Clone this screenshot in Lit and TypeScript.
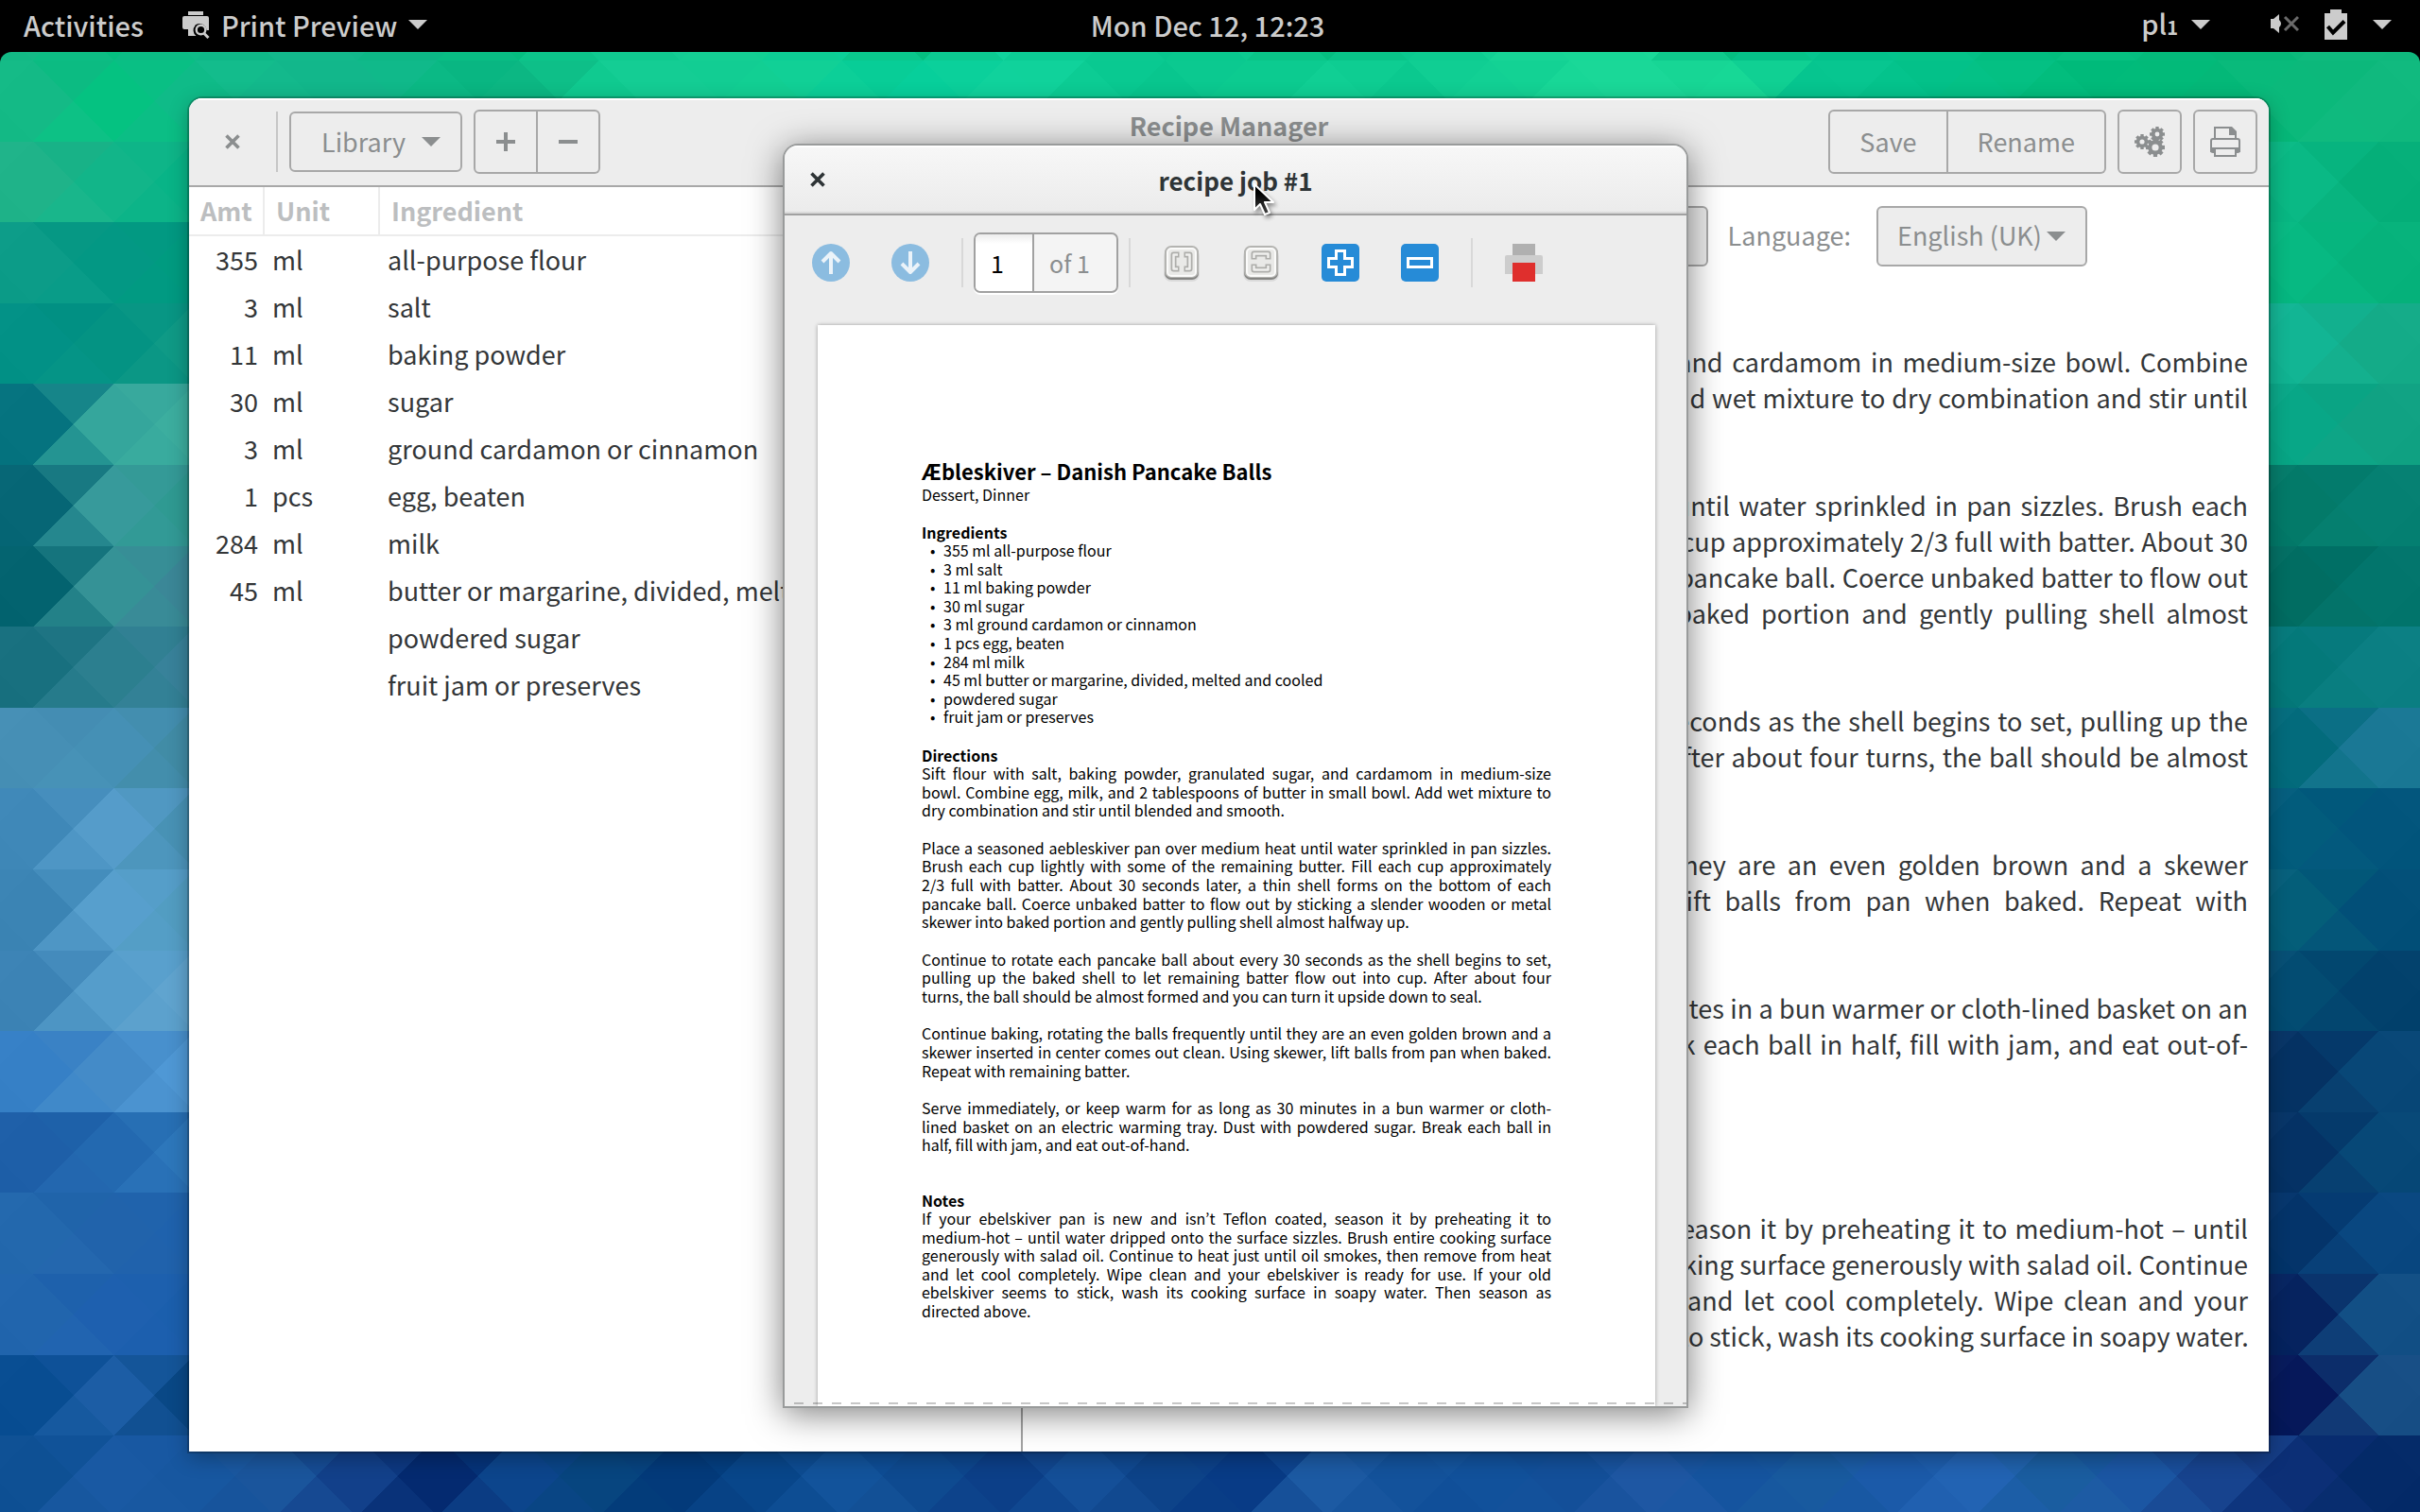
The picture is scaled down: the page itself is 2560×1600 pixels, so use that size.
import { LitElement, html, svg, css } from "lit";
import { customElement } from "lit/decorators.js";

type Ingredient = [string, string, string];

const INGREDIENTS: Ingredient[] = [
  ["355", "ml", "all-purpose flour"],
  ["3", "ml", "salt"],
  ["11", "ml", "baking powder"],
  ["30", "ml", "sugar"],
  ["3", "ml", "ground cardamon or cinnamon"],
  ["1", "pcs", "egg, beaten"],
  ["284", "ml", "milk"],
  ["45", "ml", "butter or margarine, divided, melted and cooled"],
  ["", "", "powdered sugar"],
  ["", "", "fruit jam or preserves"],
];

// Paragraphs are pre-broken into lines; every line but the last is justified.
const EDITOR_DIRECTIONS: string[][] = [
  [
    "Sift flour with salt, baking powder, granulated sugar, and cardamom in medium-size bowl. Combine",
    "egg, milk, and 2 tablespoons of butter in small bowl. Add wet mixture to dry combination and stir until",
    "blended and smooth.",
  ],
  [
    "Place a seasoned aebleskiver pan over medium heat until water sprinkled in pan sizzles. Brush each",
    "cup lightly with some of the remaining butter. Fill each cup approximately 2/3 full with batter. About 30",
    "seconds later, a thin shell forms on the bottom of each pancake ball. Coerce unbaked batter to flow out",
    "by sticking a slender wooden or metal skewer into baked portion and gently pulling shell almost",
    "halfway up.",
  ],
  [
    "Continue to rotate each pancake ball about every 30 seconds as the shell begins to set, pulling up the",
    "baked shell to let remaining batter flow out into cup. After about four turns, the ball should be almost",
    "formed and you can turn it upside down to seal.",
  ],
  [
    "Continue baking, rotating the balls frequently until they are an even golden brown and a skewer",
    "inserted in center comes out clean. Using skewer, lift balls from pan when baked. Repeat with",
    "remaining batter.",
  ],
  [
    "Serve immediately, or keep warm for as long as 30 minutes in a bun warmer or cloth-lined basket on an",
    "electric warming tray. Dust with powdered sugar. Break each ball in half, fill with jam, and eat out-of-",
    "hand.",
  ],
];

const EDITOR_NOTES: string[] = [
  "If your ebelskiver pan is new and isn’t Teflon coated, season it by preheating it to medium-hot – until",
  "water dripped onto the surface sizzles. Brush entire cooking surface generously with salad oil. Continue",
  "to heat just until oil smokes, then remove from heat and let cool completely. Wipe clean and your",
  "ebelskiver is ready for use. If your old ebelskiver seems to stick, wash its cooking surface in soapy water.",
];

const PRINT_DIRECTIONS: string[][] = [
  [
    "Sift flour with salt, baking powder, granulated sugar, and cardamom in medium-size",
    "bowl. Combine egg, milk, and 2 tablespoons of butter in small bowl. Add wet mixture to",
    "dry combination and stir until blended and smooth.",
  ],
  [
    "Place a seasoned aebleskiver pan over medium heat until water sprinkled in pan sizzles.",
    "Brush each cup lightly with some of the remaining butter. Fill each cup approximately",
    "2/3 full with batter. About 30 seconds later, a thin shell forms on the bottom of each",
    "pancake ball. Coerce unbaked batter to flow out by sticking a slender wooden or metal",
    "skewer into baked portion and gently pulling shell almost halfway up.",
  ],
  [
    "Continue to rotate each pancake ball about every 30 seconds as the shell begins to set,",
    "pulling up the baked shell to let remaining batter flow out into cup. After about four",
    "turns, the ball should be almost formed and you can turn it upside down to seal.",
  ],
  [
    "Continue baking, rotating the balls frequently until they are an even golden brown and a",
    "skewer inserted in center comes out clean. Using skewer, lift balls from pan when baked.",
    "Repeat with remaining batter.",
  ],
  [
    "Serve immediately, or keep warm for as long as 30 minutes in a bun warmer or cloth-",
    "lined basket on an electric warming tray. Dust with powdered sugar. Break each ball in",
    "half, fill with jam, and eat out-of-hand.",
  ],
];

const PRINT_NOTES: string[] = [
  "If your ebelskiver pan is new and isn’t Teflon coated, season it by preheating it to",
  "medium-hot – until water dripped onto the surface sizzles. Brush entire cooking surface",
  "generously with salad oil. Continue to heat just until oil smokes, then remove from heat",
  "and let cool completely. Wipe clean and your ebelskiver is ready for use. If your old",
  "ebelskiver seems to stick, wash its cooking surface in soapy water. Then season as",
  "directed above.",
];

/* ---------- wallpaper ---------- */

const COL = 85.57;
const ROW = 85.6;
const X0 = 35;
const Y0 = 64;

// Colour stops of each band: [column, colour].
const EDGE = (a: string, b: string, c: string, d: string, e: string): [number, string][] => [
  [0, a], [1, b], [2, c], [28, d], [29, e],
];
const TOP: [number, string][] = [
  [0, "14ba86"], [1, "05c281"], [2, "0fbb88"], [3, "13b98c"], [4, "12b78b"], [5, "0bb985"], [6, "0cb783"],
  [7, "10ca90"], [8, "14cd94"], [9, "12cf93"], [10, "0ccf98"], [11, "07cf9b"], [12, "10d29c"], [13, "0ccc94"],
  [14, "08c68e"], [15, "0ccb90"], [16, "10cf94"], [17, "0bc98f"], [18, "12d094"], [19, "18d797"], [20, "1ad898"],
  [21, "17d896"], [22, "06c58f"], [23, "04c38c"], [24, "04c186"], [25, "02bd7d"], [26, "01bb7a"], [27, "04b878"],
  [28, "0bb97b"], [29, "10b97e"],
];
const BANDS: [number, string][][] = [
  TOP.map(([k, c]) => [k, k % 5 === 1 ? "05be80" : c] as [number, string]),
  TOP,
  EDGE("1fb389", "12b589", "08b487", "0ab985", "05af79"),
  EDGE("0c9c88", "039884", "009b80", "07b982", "06b27b"),
  EDGE("029186", "049383", "0f9a86", "12b594", "14ab88"),
  EDGE("05737f", "35a69c", "3cae9f", "08a787", "10a283"),
  EDGE("066675", "379a9b", "2f9a92", "037a69", "058072"),
  EDGE("03636f", "359296", "3b8797", "016d62", "02756c"),
  EDGE("18707f", "2c7f8f", "38829a", "04797a", "0b7f83"),
  EDGE("468fb5", "4590b5", "418ca6", "036b7c", "1a7895"),
  EDGE("3f88b8", "559cca", "4892b5", "025c7c", "02557c"),
  EDGE("3b84b4", "579fcd", "529dc2", "045e79", "024f78"),
  EDGE("3c83b5", "559dcb", "60a4cf", "034c72", "02416c"),
  EDGE("3680c6", "448bc8", "4f98d5", "053263", "084777"),
  EDGE("1e5fa8", "2369b0", "2d77bb", "053265", "074877"),
  EDGE("2368ad", "2163ab", "1f62ad", "04346a", "094780"),
  EDGE("2165ad", "1e60af", "1b5fad", "06235f", "124f85"),
  EDGE("084d92", "1c5da5", "094886", "06185a", "174e85"),
  [
    "0e5094", "1959a3", "1757a0", "1a559c", "12408a", "042a70", "0c458c", "07457f", "033a7a", "08468a",
    "12539b", "0e4a90", "0c3f88", "144f98", "0d4389", "083b86", "1c5aa3", "13529b", "11519b", "134f99",
    "1e57a3", "15549f", "185a9f", "1b5aa9", "2263b3", "1a5da0", "1b56a3", "17438e", "0c2f76", "042a68",
  ].map((c, k) => [k, c] as [number, string]),
];

const rgb = (h: string) => [0, 2, 4].map((i) => parseInt(h.slice(i, i + 2), 16));

function at(band: [number, string][], k: number): number[] {
  if (k <= band[0][0]) return rgb(band[0][1]);
  for (let i = 1; i < band.length; i++) {
    const [k1, c1] = band[i];
    if (k <= k1) {
      const [k0, c0] = band[i - 1];
      const t = (k - k0) / (k1 - k0);
      const a = rgb(c0);
      const b = rgb(c1);
      return a.map((v, n) => v + (b[n] - v) * t);
    }
  }
  return rgb(band[band.length - 1][1]);
}

const paint = (c: number[], d = 0) =>
  `rgb(${c.map((v) => Math.max(0, Math.min(255, Math.round(v + d)))).join(",")})`;

function wallpaper() {
  const shapes: unknown[] = [];
  BANDS.forEach((band, i) => {
    const top = Y0 + (i - 1) * ROW;
    const mid = top + ROW / 2;
    const bot = top + ROW;
    const poly = (pts: number[][], fill: string) => {
      shapes.push(svg`<polygon points=${pts.map((p) => p.join(",")).join(" ")} fill=${fill}/>`);
    };
    for (let k = -1; k <= 30; k++) {
      const x = X0 + k * COL;
      const wob = ((k * 7 + i * 5 + 70) % 5) - 2;
      poly([[x, top], [x + COL / 2, mid], [x, bot], [x - COL / 2, mid]], paint(at(band, k)));
      poly([[x, top], [x + COL, top], [x + COL / 2, mid]], paint(at(band, k + 0.4), wob));
      poly([[x, bot], [x + COL, bot], [x + COL / 2, mid]], paint(at(band, k + 0.6), -wob));
    }
  });
  return html`<svg class="wallpaper" viewBox="0 0 2560 1600" preserveAspectRatio="none" shape-rendering="crispEdges" aria-hidden="true">${shapes}</svg>`;
}

/* ---------- icons ---------- */

const caret = html`<svg class="caret" viewBox="0 0 20 10" aria-hidden="true"><path d="M0 0h20L10 10z" fill="currentColor"/></svg>`;

const closeIcon = html`<svg class="icon16" viewBox="0 0 16 16" aria-hidden="true">
  <path d="M1.500 1.500L14.500 14.500M14.500 1.500L1.500 14.500" stroke="currentColor" stroke-width="3.600" fill="none"/></svg>`;

const printPreviewIcon = html`<svg class="icon30" viewBox="0 0 30 30" fill="currentColor" aria-hidden="true">
  <path d="M7 1h16v4H7z"/>
  <path d="M3 6h24q2 0 2 2v13h-2.500a7.500 7.500 0 0 0-12.500-5H7v4H3q-2 0-2-2V8q0-2 2-2z"/>
  <path d="M7 16h7.500a7.500 7.500 0 0 0 1 11H7z"/>
  <circle cx="20.500" cy="20.500" r="4.800" fill="none" stroke="currentColor" stroke-width="2.400"/>
  <path d="M24 24.500l4.500 4.500" stroke="currentColor" stroke-width="3"/>
</svg>`;

const volumeIcon = html`<svg class="icon30" viewBox="0 0 30 30" aria-hidden="true">
  <path d="M0 9h3L9 4v20l-6-5H0q-0 0 0-2z" fill="currentColor"/>
  <path d="M9 10q4 4 0 8z" fill="currentColor"/>
  <path d="M15 7l14 14M29 7L15 21" stroke="#6a6a6a" stroke-width="3"/>
</svg>`;

const batteryIcon = html`<svg class="battery" viewBox="0 0 24 32" aria-hidden="true">
  <path d="M6 0h12v4h6v28H0V4h6z" fill="currentColor"/>
  <path d="M3.500 18l5.500 6.500L21 12.500" fill="none" stroke="#000" stroke-width="4"/>
</svg>`;

function gear(cx: number, cy: number, r: number, hole: number) {
  const teeth = Array.from({ length: 8 }, (_, i) => i * 45);
  const t = r * 0.42;
  return svg`<g fill="currentColor">
    ${teeth.map((a) => svg`<rect x=${cx - t / 2} y=${cy - r} width=${t} height=${r * 0.5} transform=${`rotate(${a} ${cx} ${cy})`}/>`)}
    <circle cx=${cx} cy=${cy} r=${(r * 0.78 + hole) / 2} fill="none" stroke="currentColor" stroke-width=${r * 0.78 - hole}/>
  </g>`;
}
const gearsIcon = html`<svg class="icon32" viewBox="0 0 32 32" aria-hidden="true">
  ${gear(8, 16, 8, 2.6)}${gear(24, 8, 8, 2.4)}${gear(22, 22, 10, 3.6)}
</svg>`;

const printerIcon = html`<svg class="icon32" viewBox="0 0 32 32" fill="none" stroke="currentColor" stroke-width="2" aria-hidden="true">
  <path d="M5 13V1h16l6 6v6"/>
  <path d="M20 0h3l5 5v4h-8z" fill="currentColor" stroke="none"/>
  <path d="M5 27H3q-2 0-2-2V15q0-2 2-2h26q2 0 2 2v10q0 2-2 2h-2"/>
  <path d="M1 23h30"/>
  <path d="M5 23v8h22v-8"/>
  <path d="M0 23h4v4H0zM28 23h4v4h-4z" fill="currentColor" stroke="none"/>
</svg>`;

const plusIcon = html`<svg class="icon20" viewBox="0 0 20 20" aria-hidden="true"><path d="M10 0v20M0 10h20" stroke="currentColor" stroke-width="4"/></svg>`;
const minusIcon = html`<svg class="icon20" viewBox="0 0 20 20" aria-hidden="true"><path d="M0 10h20" stroke="currentColor" stroke-width="4"/></svg>`;

const arrowIcon = (down: boolean) => html`<svg class="icon40" viewBox="0 0 40 40" aria-hidden="true">
  <circle cx="20" cy="20" r="20" fill="#8bbce0"/>
  <path d=${down ? "M20 8v22M11 21l9 9 9-9" : "M20 32V10M11 19l9-9 9 9"} fill="none" stroke="#ebf3f9" stroke-width="4" stroke-linejoin="round"/>
</svg>`;

const fitIcon = (turn: number) => html`<svg class="icon40" viewBox="0 0 40 40" aria-hidden="true">
  <rect x="1" y="5" width="38" height="35" rx="8" fill="#000" opacity="0.08"/>
  <rect x="2" y="3" width="36" height="35" rx="7" fill="#858583"/>
  <rect x="2" y="2" width="36" height="34" rx="7" fill="#b4b4b1"/>
  <rect x="5" y="5" width="30" height="29" rx="4" fill="#e9e9e7" stroke="#fbfbfa" stroke-width="2"/>
  <g transform=${`rotate(${turn} 20 19)`} fill="none" stroke-linejoin="round">
    <path d="M17.500 11.500h-6v15h6M22.500 11.500h6v15h-6" stroke="#adadaa" stroke-width="6"/>
    <path d="M16 11.500h-4.500v15H16M24 11.500h4.500v15H24" stroke="#f0f0ee" stroke-width="2.500"/>
  </g>
</svg>`;

const zoomIcon = (plus: boolean) => html`<svg class="icon40" viewBox="0 0 40 40" aria-hidden="true">
  <rect width="40" height="40" rx="5" fill="#268bd7"/>
  <path d=${plus ? "M15.500 7.500h9v8h8v9h-8v8h-9v-8h-8v-9h8z" : "M7.500 15.500h25v9h-25z"} fill="none" stroke="#fff" stroke-width="3"/>
</svg>`;

const printIcon = html`<svg class="icon40" viewBox="0 0 40 40" aria-hidden="true">
  <path d="M8 0h24v12H8z" fill="#b0b0b0"/>
  <path d="M2 12h36q2 0 2 2v18H0V14q0-2 2-2z" fill="#cdcdcd"/>
  <path d="M8 20h24v20H8z" fill="#df2f2d"/>
</svg>`;

/* ---------- shared styles ---------- */

const shared = css`
  *, *::before, *::after { box-sizing: border-box; }
  button, input, select {
    font: inherit; color: inherit; margin: 0; padding: 0; border: 0; background: none; border-radius: 0;
  }
  button { display: inline-flex; align-items: center; justify-content: center; }
  svg { display: block; flex: none; }
  .caret { width: 20px; height: 10px; }
  .icon16 { width: 16px; height: 16px; }
  .icon20 { width: 20px; height: 20px; }
  .icon30 { width: 30px; height: 30px; }
  .icon32 { width: 32px; height: 32px; }
  .icon40 { width: 40px; height: 40px; }
  .battery { width: 24px; height: 32px; }
  .line { display: block; white-space: nowrap; text-align: justify; text-align-last: justify; }
  .line:last-child { text-align-last: left; }
  .full .line:last-child { text-align-last: justify; }
`;

const lines = (l: string[]) => l.map((t) => html`<span class="line">${t}</span>`);

/* ---------- top panel ---------- */

@customElement("top-panel")
class TopPanel extends LitElement {
  static styles = [shared, css`
    :host {
      display: grid; grid-template-columns: 1fr auto 1fr; align-items: center;
      height: 55px; padding: 0 30px 3px 25px; background: #000; color: #ccc;
      font-weight: 500; font-size: 29px;
    }
    .side { display: flex; align-items: center; }
    .app { gap: 12px; margin-left: 40px; }
    .end { justify-content: flex-end; }
    .lang { gap: 14px; }
    small { font-size: 20px; font-weight: 700; }
    .status { gap: 27px; margin-left: 64px; }
  `];
  render() {
    return html`
      <nav class="side">
        <button>Activities</button>
        <button class="app">${printPreviewIcon}Print Preview${caret}</button>
      </nav>
      <button>Mon Dec 12, 12:23</button>
      <div class="side end">
        <button class="lang"><span>pl<small>1</small></span>${caret}</button>
        <button class="status" aria-label="System menu">${volumeIcon}${batteryIcon}${caret}</button>
      </div>`;
  }
}

/* ---------- recipe manager ---------- */

@customElement("recipe-window")
class RecipeWindow extends LitElement {
  static styles = [shared, css`
    :host {
      display: flex; flex-direction: column; overflow: hidden; color: #333638;
      background: #fff; border-radius: 14px 14px 0 0;
      box-shadow: 0 0 0 2px rgba(0, 0, 0, 0.2), 0 6px 22px rgba(0, 0, 0, 0.3);
    }
    .head {
      display: grid; grid-template-columns: 1fr auto 1fr; height: 94px; flex: none;
      padding: 0 12px 2px; background: #ededed; border-top: 2px solid #fff; border-bottom: 2px solid #a8a8a8; color: #8b8e8f;
    }
    .group { display: flex; align-items: center; gap: 12px; }
    .group.end { justify-content: flex-end; }
    .close { width: 68px; height: 64px; }
    .sep { width: 2px; height: 64px; background: #c6c6c6; }
    .title { font-size: 27px; font-weight: 700; margin: 8px 0 0; line-height: 38px; }
    .btn { border: 2px solid #a8a8a8; border-radius: 6px; height: 68px; min-width: 68px; background: #ededed; }
    .library { height: 64px; gap: 17px; padding: 0 21px 0 32px; }
    .linked { display: flex; }
    .linked .btn:first-child { border-radius: 6px 0 0 6px; }
    .linked .btn:last-child { border-radius: 0 6px 6px 0; border-left: 0; min-width: 66px; }
    .linked .text { padding: 0 31px; }
    .panes { display: grid; grid-template-columns: 2fr 3fr; flex: 1; min-height: 0; }
    .list { overflow: hidden; }
    table { border-collapse: separate; border-spacing: 0; width: 100%; table-layout: fixed; }
    .amt { width: 80px; }
    .unit { width: 122px; }
    th {
      height: 52px; padding: 0 12px; text-align: left; color: #bcbec0; font-weight: 700;
      border-right: 2px solid #ececec; border-bottom: 2px solid #ececec; line-height: 38px;
    }
    th:last-child { border-right: 0; }
    td { height: 50px; padding: 0 8px; white-space: nowrap; line-height: 38px; }
    td:first-child { text-align: right; padding: 0 7px 0 0; }
    .editor { padding: 20px 22px 0 4px; min-width: 0; border-left: 2px solid #a3a3a3; }
    .tools { display: flex; align-items: center; justify-content: flex-end; gap: 21px; padding-right: 170px; color: #8b8e8f; }
    .tools .btn { height: 64px; }
    label { padding-bottom: 2px; }
    .stub { width: 200px; }
    .pick { position: relative; display: flex; align-items: center; margin-left: 6px; }
    select.btn { appearance: none; padding: 0 46px 2px 20px; }
    .pick .caret { position: absolute; right: 23px; pointer-events: none; }
    .text-body { margin-top: 82px; line-height: 38px; }
    p { margin: 0 0 38px; }
    .notes { margin-top: 119px; }
  `];
  render() {
    return html`
      <header class="head">
        <div class="group">
          <button class="close" aria-label="Close">${closeIcon}</button>
          <span class="sep"></span>
          <button class="btn library">Library${caret}</button>
          <div class="linked">
            <button class="btn" aria-label="Add">${plusIcon}</button>
            <button class="btn" aria-label="Remove">${minusIcon}</button>
          </div>
        </div>
        <h1 class="title">Recipe Manager</h1>
        <div class="group end">
          <div class="linked">
            <button class="btn text">Save</button>
            <button class="btn text">Rename</button>
          </div>
          <button class="btn" aria-label="Settings">${gearsIcon}</button>
          <button class="btn" aria-label="Print">${printerIcon}</button>
        </div>
      </header>
      <div class="panes">
        <section class="list">
          <table>
            <thead>
              <tr><th class="amt">Amt</th><th class="unit">Unit</th><th>Ingredient</th></tr>
            </thead>
            <tbody>
              ${INGREDIENTS.map(([a, u, n]) => html`<tr><td>${a}</td><td>${u}</td><td>${n}</td></tr>`)}
            </tbody>
          </table>
        </section>
        <section class="editor">
          <div class="tools">
            <span class="btn stub"></span>
            <label for="language">Language:</label>
            <span class="pick">
              <select class="btn" id="language"><option>English (UK)</option></select>
              ${caret}
            </span>
          </div>
          <div class="text-body">
            ${EDITOR_DIRECTIONS.map((p) => html`<p>${lines(p)}</p>`)}
            <p class="notes full">${lines(EDITOR_NOTES)}</p>
          </div>
        </section>
      </div>`;
  }
}

/* ---------- print preview ---------- */

@customElement("preview-window")
class PreviewWindow extends LitElement {
  static styles = [shared, css`
    :host {
      display: flex; flex-direction: column; overflow: hidden;
      background: #ededed; border: 2px solid #999b9b; border-radius: 16px 16px 0 0; color: #2e3436;
      box-shadow: 0 6px 36px rgba(0, 0, 0, 0.5);
    }
    .head {
      display: grid; grid-template-columns: 70px 1fr 70px; align-items: center; height: 74px; flex: none;
      background: linear-gradient(#f7f7f7, #ebebeb); border-top: 2px solid #fff;
      border-bottom: 2px solid #a1a1a1; box-shadow: inset 0 -2px #dadada;
    }
    .close { height: 64px; padding-bottom: 2px; }
    .title { margin: 0; font-size: 26px; font-weight: 700; text-align: center; line-height: 38px; }
    .bar { display: flex; align-items: center; height: 100px; padding-left: 29px; gap: 34px; flex: none; }
    .cell { display: flex; align-items: center; gap: 11px; }
    .set { display: flex; gap: 44px; }
    .split { width: 2px; height: 52px; background: #d8d8d8; }
    .pager {
      display: flex; height: 64px; border: 2px solid #a1a1a1; border-radius: 7px; overflow: hidden; background: #f4f4f4;
      box-shadow: 0 2px #fff; font-size: 25px;
    }
    .pager input { width: 62px; padding-left: 16px; color: #000; background: linear-gradient(#ededed, #fff 10px); border-right: 2px solid #a1a1a1; }
    .pager output { display: flex; align-items: center; padding: 0 28px 0 16px; color: #8b8e8f; }
    .wrap { flex: 1; min-height: 0; padding: 16px 33px 0 35px; overflow: hidden; display: flex; position: relative; }
    .wrap::after {
      content: ""; position: absolute; left: 0; right: 0; bottom: 2px; height: 2px;
      background: repeating-linear-gradient(90deg, transparent 0 10px, rgba(0, 0, 0, 0.22) 10px 20px);
    }
    .page {
      flex: 1; background: #fff; padding: 140px 110px 0; box-shadow: 0 0 4px rgba(0, 0, 0, 0.35);
      font-size: 16px; line-height: 1.225; color: #000;
    }
    h2 { margin: 0; font-size: 22px; line-height: 29px; font-weight: 700; }
    h3 { margin: 20px 0 0; font-size: 16px; font-weight: 700; line-height: 20px; }
    .notes { margin-top: 38px; }
    ul { margin: 0; padding: 0 0 0 23px; list-style: none; }
    li::before { content: "•"; display: inline-block; width: 14px; margin-left: -14px; }
    p { margin: 0 0 20px; }
    .tag { margin: 0; line-height: 20px; }
  `];
  render() {
    return html`
      <header class="head">
        <button class="close" aria-label="Close">${closeIcon}</button>
        <h1 class="title">recipe job #1</h1>
      </header>
      <div class="bar">
        <div class="set">
          <button aria-label="Previous page">${arrowIcon(false)}</button>
          <button aria-label="Next page">${arrowIcon(true)}</button>
        </div>
        <div class="cell">
          <span class="split"></span>
          <div class="pager">
            <input id="page" aria-label="Page" value="1">
            <output for="page">of 1</output>
          </div>
          <span class="split"></span>
        </div>
        <div class="set">
          <button aria-label="Fit width">${fitIcon(0)}</button>
          <button aria-label="Fit page">${fitIcon(90)}</button>
          <button aria-label="Zoom in">${zoomIcon(true)}</button>
          <button aria-label="Zoom out">${zoomIcon(false)}</button>
        </div>
        <span class="split"></span>
        <button aria-label="Print">${printIcon}</button>
      </div>
      <div class="wrap">
        <article class="page">
          <h2>Æbleskiver – Danish Pancake Balls</h2>
          <p class="tag">Dessert, Dinner</p>
          <h3>Ingredients</h3>
          <ul>${INGREDIENTS.map((i) => html`<li>${i.filter(Boolean).join(" ")}</li>`)}</ul>
          <h3>Directions</h3>
          ${PRINT_DIRECTIONS.map((p) => html`<p>${lines(p)}</p>`)}
          <h3 class="notes">Notes</h3>
          <p>${lines(PRINT_NOTES)}</p>
        </article>
      </div>`;
  }
}

/* ---------- desktop ---------- */

@customElement("app-root")
class AppRoot extends LitElement {
  static styles = [shared, css`
    :host {
      display: flex; flex-direction: column; height: 100vh; position: relative; overflow: hidden; background: #000;
      font-family: "Noto Sans CJK KR", "Noto Sans", sans-serif; font-size: 27px; line-height: 38px;
    }
    .desktop { flex: 1; position: relative; overflow: hidden; border-radius: 12px 12px 0 0; }
    .wallpaper { position: absolute; left: 0; bottom: 0; width: 100%; height: 100vh; }
    .recipe { position: absolute; left: 200px; right: 160px; top: 49px; bottom: 64px; }
    .preview { position: absolute; left: 828px; right: 774px; top: 97px; bottom: 110px; }
    .cursor { position: absolute; left: 1325px; top: 138px; width: 24px; height: 38px; filter: drop-shadow(2px 3px 2px rgba(0, 0, 0, 0.4)); }
  `];
  render() {
    return html`
      <top-panel></top-panel>
      <main class="desktop">
        ${wallpaper()}
        <recipe-window class="recipe"></recipe-window>
        <preview-window class="preview"></preview-window>
        <svg class="cursor" viewBox="0 0 24 38" aria-hidden="true">
          <defs>
            <linearGradient id="ink" x1="0" y1="0" x2="0" y2="1"><stop offset="0.3" stop-color="#000"/><stop offset="1" stop-color="#444"/></linearGradient>
          </defs>
          <path d="M2 2v27l6-6 5 11 5-2-5-11h9z" fill="url(#ink)" stroke="#fff" stroke-width="2" stroke-linejoin="round"/>
        </svg>
      </main>`;
  }
}
